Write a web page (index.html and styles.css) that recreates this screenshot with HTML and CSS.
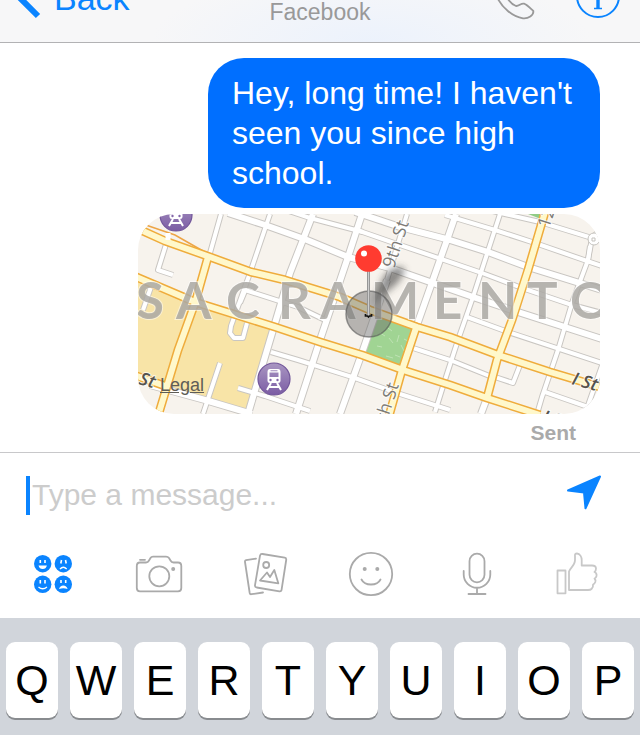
FILE: index.html
```html
<!DOCTYPE html>
<html lang="en">
<head>
<meta charset="utf-8">
<meta name="viewport" content="width=device-width, initial-scale=1">
<title>Messages</title>
<link rel="stylesheet" href="styles.css">
</head>
<body>
<div class="app">
  <header class="navbar">
    <a class="back" href="#">
      <svg class="nav-icon" width="40" height="42" viewBox="0 0 40 42" aria-hidden="true"><path d="M38 16 17-5 38-26" fill="none" stroke="#0a84ff" stroke-width="6"/></svg>
      <span>Back</span>
    </a>
    <p class="network">Facebook</p>
    <div class="nav-actions">
      <button type="button" aria-label="Call">
        <svg class="nav-icon" width="44" height="42" viewBox="493 0 44 42"><path d="M497-3C502 8 513 17 523 18.3 528 19 534 15 533.3 11 530 8 527 4.700 524 3.700 521 3 519 6.300 516 6 513 5 509 1 506.500-3" fill="none" stroke="#999" stroke-width="1.800"/></svg>
      </button>
      <button type="button" aria-label="Info">
        <svg class="nav-icon" width="46" height="42" viewBox="575 0 46 42"><circle cx="598" cy="-4" r="21" fill="none" stroke="#0a84ff" stroke-width="2"/><path d="M594 8.500h8" fill="none" stroke="#0a84ff" stroke-width="1.500"/><path d="M598 9V-8" stroke="#0a84ff" stroke-width="3.400"/></svg>
      </button>
    </div>
  </header>

  <main class="thread">
    <p class="bubble">Hey, long time! I haven't seen you since high school.</p>
    <figure class="map">
      <svg class="map-art" viewBox="138 214 462 200" role="img" aria-label="Map of Sacramento">
        <defs>
          <filter id="soft" x="-50%" y="-50%" width="200%" height="200%"><feGaussianBlur stdDeviation="3.500"/></filter>
          <linearGradient id="plum" x1="0" y1="0" x2="0" y2="1"><stop offset="0" stop-color="#a996c2"/><stop offset="1" stop-color="#7b5ca4"/></linearGradient>
          <g id="lanes">
            <path d="M221 214 210 253M270 214 250 273 231 326 230 333 234 338H243L247 323M245 291 240 303"/>
            <path d="M500 214 473 297 458 340 445 380 435 412M590 246 588 260 572 303 558 350 542 397 537 414M605 357 585 414"/>
            <path d="M445 215 495 230 535 243 587 261 602 266M480 208 505 214 540 222 592 238 602 228M592 238 588 260"/>
            <path d="M354 229 400 245 450 262 482 273 522 288 572 305 602 313M467 317 508 332 602 363M413 348 450 360 492 377M495 377 513 383 520 365M545 392 588 407"/>
            <path d="M245 290 298 307 325 320M271 352 298 360 352 377 397 393 450 410M238 388 265 396 310 411"/>
            <path d="M168 238 158 270 173 275M151 287 143 310M220 363 203 414M407 214 387 280"/>
            <path d="M286 210 310 218 363 232"/>
          </g>
          <g id="streets">
            <path d="M313 214 290 273 273 330 248 414M362 214 348 257 320 340 296 414M387 280 362 353 340 414M456 214 447 240 417 325M487 398 481 414"/>
            <path d="M228 213 265 225 307 240 348 257 390 268 450 289 473 297 518 312 602 339"/>
            <path d="M355 212 400 227 450 240 488 252 528 267 602 290M150 385 205 400 252 414"/>
          </g>
          <g id="avenues">
            <path d="M134 227 165 241 210 257 251 272 285 280 340 297 370 310 417 327 450 337 498 355 550 372 600 387"/>
            <path d="M134 276 195 302 275 327 320 342 362 355 403 370 450 385 487 398 540 415"/>
            <path d="M208 257 195 303 178 350 158 416M545 212 528 270 512 320 497 360 487 398M417 325 402 370 389 416"/>
            <path d="M134 375 168 387"/>
          </g>
          <g id="train">
            <circle r="16" fill="url(#plum)" stroke="#71559a" stroke-width="1.200"/>
            <path d="M-4-10H4Q6.500-10 6.500-7V2Q6.500 4 4 4H-4Q-6.500 4-6.500 2V-7Q-6.500-10-4-10ZM-4.500-6.500V-2H4.500V-6.500ZM-3.500-8.700V-7.700H3.500V-8.700Z" fill="#fff" fill-rule="evenodd"/>
            <circle cx="-3.500" cy="1" r="1.200" fill="#8467a9"/><circle cx="3.500" cy="1" r="1.200" fill="#8467a9"/>
            <path d="M-3 4-7 11M3 4 7 11M-5 8H5" stroke="#fff" stroke-width="2"/>
          </g>
        </defs>
        <rect x="138" y="214" width="462" height="200" fill="#f7f3ed"/>
        <path d="M138 282 195 303 273 328 248 412 205 400 138 378Z" fill="#f8e4a7"/>
        <path d="M375 315 413 327 402 368 364 355Z" fill="#a0d493" stroke="#8cc17d"/>
        <path d="M528 214H545L541 219Z" fill="#90cc86"/>
        <path d="M380 333l5 3m3-8 4 3m-15 15 5 1m7-9 4 5m6-8-2 7m7-3 4 2m-22 15 7 2m8-13 3 6m-9 4 5 2" stroke="#bfe3b4" fill="none"/>
        <use href="#lanes" class="lane-edge"/>
        <use href="#streets" class="street-edge"/>
        <use href="#lanes" class="lane"/>
        <use href="#streets" class="street"/>
        <path d="M140 223 175 235 210 255" fill="none" stroke="#eda546" stroke-width="1.500"/>
        <use href="#avenues" class="avenue-edge"/>
        <use href="#avenues" class="avenue"/>
        <path d="M168 233V240" stroke="#fff" stroke-width="5"/>
        <g fill="none" stroke="#c5c3be"><circle cx="594" cy="239" r="6" fill="#fff"/><path d="M592 238h3v3h-3z"/></g>
        <text class="city" x="136 176 226 278 320 371 433 478 527 570" y="319">SACRAMENTO</text>
        <text class="street-name" transform="translate(394 269) rotate(-72)">9th St</text>
        <text class="street-name" text-anchor="end" transform="translate(399 385) rotate(-72)">9th St</text>
        <text class="street-name" transform="translate(549 229) rotate(-72)">12th St</text>
        <text class="avenue-name" transform="translate(138 384) rotate(16)">St</text>
        <text class="avenue-name" transform="translate(571 384) rotate(16)">I St</text>
        <text class="avenue-name" transform="translate(541 422) rotate(16)">J St</text>
        <use href="#train" x="176" y="215"/>
        <use href="#train" x="274" y="379"/>
        <path d="M372 306 384 276Q394 264 405 268 402 282 389 290Z" fill="#333" opacity=".55" filter="url(#soft)"/>
        <circle cx="369" cy="314" r="23" fill="#666" fill-opacity=".45" stroke="#555" stroke-opacity=".6" stroke-width="1.500"/>
        <path d="M365.500 314v2h2l1 1 1-1h2v-2" fill="none" stroke="#111" stroke-width="1.700"/>
        <path d="M368.500 270V315" stroke="#969696" stroke-width="3"/><path d="M368.500 270V315" stroke="#ccc" stroke-width="1"/>
        <circle cx="368.500" cy="258.500" r="13.300" fill="#ff3b30"/><circle cx="364" cy="253.500" r="3" fill="#fff"/>
      </svg>
      <a class="legal" href="#">Legal</a>
    </figure>
    <p class="status">Sent</p>
  </main>

  <form class="composer">
    <div class="entry">
      <span class="caret"></span>
      <input class="field" type="text" placeholder="Type a message..." aria-label="Message">
      <button type="button" aria-label="Send"><svg width="36" height="42" viewBox="566 474 36 42"><path d="M568 490.500 600 476.500 585.500 508.300 584 492.500Z" fill="#0a84ff" stroke="#0a84ff" stroke-width="2" stroke-linejoin="round"/></svg></button>
    </div>
    <div class="tools">
      <button type="button" aria-label="Stickers">
        <svg width="60" height="48" viewBox="23 550 60 48">
          <g fill="#0a84ff"><circle cx="42.700" cy="563.700" r="8.700"/><circle cx="63.300" cy="563.700" r="8.700"/><circle cx="42.700" cy="584.300" r="8.700"/><circle cx="63.300" cy="584.300" r="8.700"/></g>
          <path d="M40.300 560v3M45 560v3M61.500 560l-.7 3.500M65.500 560l.7 3.500M40.300 580v3.500M45 580v3.500M61 580v3M65.700 580v3" stroke="#fff" stroke-width="1.600"/>
          <path d="M38.500 565.500h8.400Q46 569 42.700 569T38.500 565.500ZM59 589Q60 585.500 63.300 585.500T67.600 589Q63.300 587.500 59 589Z" fill="#fff"/>
          <path d="M60 569Q63.300 565.500 66.700 569M38.500 587Q42.700 590.500 47 587" fill="none" stroke="#fff" stroke-width="1.300"/>
        </svg>
      </button>
      <button type="button" aria-label="Camera">
        <svg class="line" width="60" height="48" viewBox="129 550 60 48">
          <path d="M140 562.500H146Q148 562.500 149 560.500L150.500 558Q151.300 556.700 153 556.700H166Q168 556.700 169 558L170.500 560.500Q171.500 562.500 173.500 562.500H178Q181.300 562.500 181.300 566V588Q181.300 591.300 178 591.300H140Q136.800 591.300 136.800 588V566Q136.800 562.500 140 562.500ZM140 559.800H145"/><circle cx="159.300" cy="576.300" r="10"/><circle class="dot" cx="173.200" cy="569" r="2"/>
        </svg>
      </button>
      <button type="button" aria-label="Photos">
        <svg class="line" width="60" height="48" viewBox="235 550 60 48">
          <path d="M256 558.700 246 560.200Q244.700 560.500 245 562L249.700 593Q250 594.500 251.500 594.200L263 592.500"/>
          <path d="M262.500 554 284.700 557.700Q286.500 558 286.200 560L281.600 589.700Q281.300 591.600 279.500 591.300L256.700 587.500Q254.700 587 255 585.200L260 555.700Q260.500 553.700 262.500 554ZM260 580.500 267 572.500 270 577 274.300 570 278.300 583.300Z"/><circle cx="266.200" cy="565" r="3"/>
        </svg>
      </button>
      <button type="button" aria-label="Emoji">
        <svg class="line" width="60" height="48" viewBox="341 550 60 48"><circle cx="371" cy="574" r="21.200"/><path d="M361.500 579.500Q364 584.500 371 584.500T380.500 579.500"/><circle class="dot" cx="364.700" cy="569" r="2"/><circle class="dot" cx="377.300" cy="569" r="2"/></svg>
      </button>
      <button type="button" aria-label="Voice">
        <svg class="line" width="60" height="48" viewBox="447 550 60 48"><rect x="469.500" y="553.700" width="15" height="28.600" rx="7.500"/><path d="M463.700 571V574.500A13.300 13.300 0 0 0 490.300 574.500V571M477 588V594M468.500 594H485.500"/></svg>
      </button>
      <button type="button" aria-label="Like">
        <svg class="line like" width="60" height="48" viewBox="553 550 60 48"><path d="M557.500 570.500H565.500V593.300H557.500ZM569 590V571.500C570 568 575 565.500 575 560V556Q574.500 553.500 577 553.500C580 553.500 581.700 557 581.700 560V565.500H592Q596 565.500 596 568.500 596 571 594.500 572 597 573 596.500 576 596 578 594.500 578.500 596 580 595.300 582 594.500 584 593 584.500 593.500 587 591.500 589 590.500 590 588 590Z"/></svg>
      </button>
    </div>
  </form>

  <div class="keyboard">
    <button type="button">Q</button>
    <button type="button">W</button>
    <button type="button">E</button>
    <button type="button">R</button>
    <button type="button">T</button>
    <button type="button">Y</button>
    <button type="button">U</button>
    <button type="button">I</button>
    <button type="button">O</button>
    <button type="button">P</button>
  </div>
</div>
</body>
</html>
```
FILE: styles.css
```css
* {
  box-sizing: border-box;
}

body {
  margin: 0;
  background: #fff;
  font-family: "Liberation Sans", Arial, sans-serif;
  overflow-x: hidden;
}

p,
figure {
  margin: 0;
}

button {
  padding: 0;
  border: 0;
  background: none;
  font: inherit;
}

svg {
  display: block;
}

.app {
  display: flex;
  flex-direction: column;
  min-height: 100vh;
}

/* Navigation bar */
.navbar {
  display: grid;
  grid-template-columns: 1fr auto 1fr;
  grid-template-rows: 42px;
  border-bottom: 1px solid #b2b2b4;
  background: radial-gradient(ellipse 220px 70px at 58% 100%, #ecf2fc, #f7f7f8);
}

.nav-icon {
  overflow: visible;
}

.back {
  display: flex;
  align-items: flex-end;
  gap: 14px;
  color: #0a84ff;
  font-size: 34px;
  line-height: 40px;
  text-decoration: none;
}

.back span {
  margin-bottom: 24px;
}

.network {
  align-self: end;
  padding-bottom: 18px;
  color: #999;
  font-size: 23px;
  line-height: 24px;
}

.nav-actions {
  display: flex;
  justify-content: flex-end;
  gap: 38px;
  padding-right: 19px;
}

/* Conversation */
.thread {
  display: flex;
  flex-direction: column;
  align-items: flex-end;
  gap: 6px;
  padding: 15px 40px 6px;
}

.bubble {
  max-width: 392px;
  padding: 15px 24px;
  border-radius: 36px;
  background: #006fff;
  color: #fff;
  font-size: 32px;
  line-height: 40px;
}

.map {
  position: relative;
  width: 100%;
  max-width: 462px;
  overflow: hidden;
  border-radius: 36px;
}

.map-art {
  width: 100%;
}

.legal {
  position: absolute;
  left: 22px;
  bottom: 19px;
  color: #5f5d57;
  font-size: 18px;
  line-height: 20px;
}

.status {
  padding-right: 24px;
  color: #aaa;
  font-size: 21px;
  font-weight: bold;
  line-height: 26px;
}

/* Map drawing */
.lane,
.lane-edge,
.street,
.street-edge,
.avenue,
.avenue-edge {
  fill: none;
  stroke-linejoin: round;
}

.lane-edge {
  stroke: #c9c6c2;
  stroke-width: 6px;
}

.lane {
  stroke: #fff;
  stroke-width: 4px;
}

.street-edge {
  stroke: #c9c6c2;
  stroke-width: 8px;
}

.street {
  stroke: #fff;
  stroke-width: 6px;
}

.avenue-edge {
  stroke: #efac3c;
  stroke-width: 9px;
}

.avenue {
  stroke: #fff8cb;
  stroke-width: 6px;
}

.city {
  fill: #aaa8a3;
  fill-opacity: 0.85;
  stroke: #fff;
  stroke-opacity: 0.5;
  stroke-width: 2px;
  paint-order: stroke;
  font-family: Lato, sans-serif;
  font-size: 51px;
  font-weight: bold;
}

.street-name,
.avenue-name {
  stroke: #fff;
  stroke-opacity: 0.7;
  stroke-width: 2px;
  paint-order: stroke;
  font-family: "Open Sans", sans-serif;
  font-size: 18px;
}

.street-name {
  fill: #7d7b77;
}

.avenue-name {
  fill: #55534f;
  font-style: italic;
  font-weight: 600;
}

/* Message entry */
.composer {
  border-top: 1px solid #c8c8ca;
}

.entry {
  display: flex;
  align-items: center;
  gap: 2px;
  padding: 20px 38px 0 26px;
}

.caret {
  width: 4px;
  height: 39px;
  background: #0a84ff;
}

.field {
  flex: 1;
  min-width: 0;
  height: 44px;
  padding: 0;
  border: 0;
  outline: 0;
  background: none;
  color: #000;
  font: inherit;
  font-size: 30px;
}

.field::placeholder {
  color: #ccc;
  opacity: 1;
}

.tools {
  display: grid;
  grid-template-columns: repeat(6, 1fr);
  justify-items: center;
  padding: 33px 4px 20px 0;
}

.line {
  fill: none;
  stroke: #aaa;
  stroke-width: 1.8px;
  stroke-linecap: round;
  stroke-linejoin: round;
}

.line .dot {
  fill: #aaa;
  stroke: none;
}

.like {
  stroke: #c8c8c8;
}

/* Keyboard */
.keyboard {
  display: grid;
  grid-template-columns: repeat(10, 1fr);
  align-content: start;
  flex: 1;
  gap: 12px;
  padding: 24px 6px 17px;
  background: #d1d5db;
}

.keyboard button {
  height: 76px;
  border-radius: 9px;
  background: #fff;
  box-shadow: 0 2px 0 #888b8f;
  color: #000;
  font-size: 43px;
  line-height: 76px;
}
```
